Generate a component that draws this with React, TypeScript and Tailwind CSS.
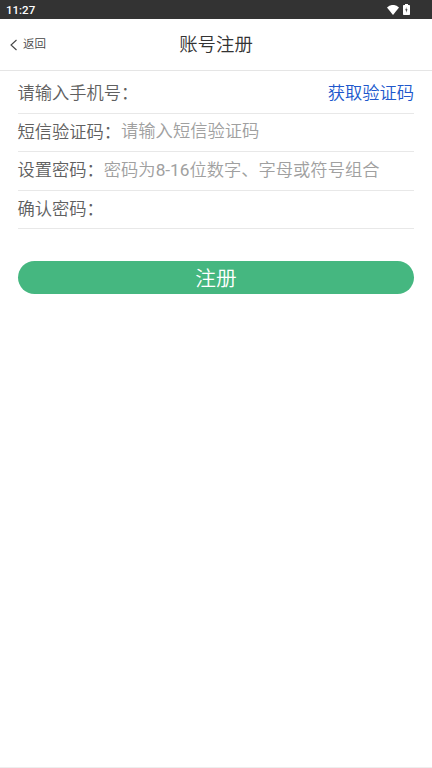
export default function App() {
  return (
    <div className="flex h-[768px] w-[432px] flex-col overflow-hidden bg-white font-['Roboto','Noto_Sans_CJK_SC',sans-serif] text-[#606060]">
      <div className="flex h-[19px] shrink-0 items-center justify-between bg-[#333] pl-[6px] pr-[22px] text-white">
        <span className="pt-px text-[11.500px] font-medium leading-[18px]">11:27</span>
        <div className="flex items-center gap-[4px]">
          <svg width="12" height="10" viewBox="0 0 13 10" preserveAspectRatio="none"><path d="M0 2.4Q6.5-2.6 13 2.4L6.5 10Z" fill="white" /></svg>
          <svg className="-mt-px" width="7" height="11" viewBox="0 0 7 11"><path fillRule="evenodd" d="M2 0h3v1h1.200q.8 0 .8.8v8.400q0 .8-.8.8H.8Q0 11 0 10.200V1.800Q0 1 .8 1H2ZM3.400 3 2.300 6.300h.9v2.500l1.300-3.600h-1.100Z" fill="white" /></svg>
        </div>
      </div>
      <header className="grid h-[52px] shrink-0 grid-cols-3 items-center border-b border-[#e5e5e5] px-[10px] text-[#333]">
        <div className="flex items-center gap-[6px] text-[11.500px] font-[350] text-[#444]">
          <svg width="7" height="12" viewBox="0 0 7 12" fill="none" stroke="#444" strokeWidth="1.100"><path d="M6.500 1 1 6 6.500 11" /></svg>
          <span className="pt-px">返回</span>
        </div>
        <h1 className="whitespace-nowrap text-center text-[18.400px] font-[350] leading-[26px]">账号注册</h1>
      </header>
      <main className="flex flex-col px-[18px] pt-[4px] text-[17.280px] font-[350]">
        <div className="flex h-[39px] items-center justify-between border-b border-[#e8e8e8]">
          <span className="-ml-[0.5px]">请输入手机号：</span><span className="text-[#2058cc]">获取验证码</span>
        </div>
        <div className="flex h-[38px] items-center border-b border-[#e8e8e8]">
          <span className="-ml-[0.5px]">短信验证码：</span><span className="pb-px text-[#a0a0a0]">请输入短信验证码</span>
        </div>
        <div className="flex h-[39px] items-center border-b border-[#e8e8e8]">
          <span className="-ml-[0.5px]">设置密码：</span><span className="pb-px text-[#a0a0a0]">密码为<span className="font-normal">8-16</span>位数字、字母或符号组合</span>
        </div>
        <div className="flex h-[38px] items-center border-b border-[#e8e8e8]"><span className="-ml-[0.5px]">确认密码：</span></div>
        <button className="mt-[32px] h-[33px] rounded-full bg-[#45b780] pt-[3px] text-[20.700px] font-[350] leading-[30px] text-white">注册</button>
      </main>
      <div className="mt-auto h-px bg-[#eee]" />
    </div>
  );
}
